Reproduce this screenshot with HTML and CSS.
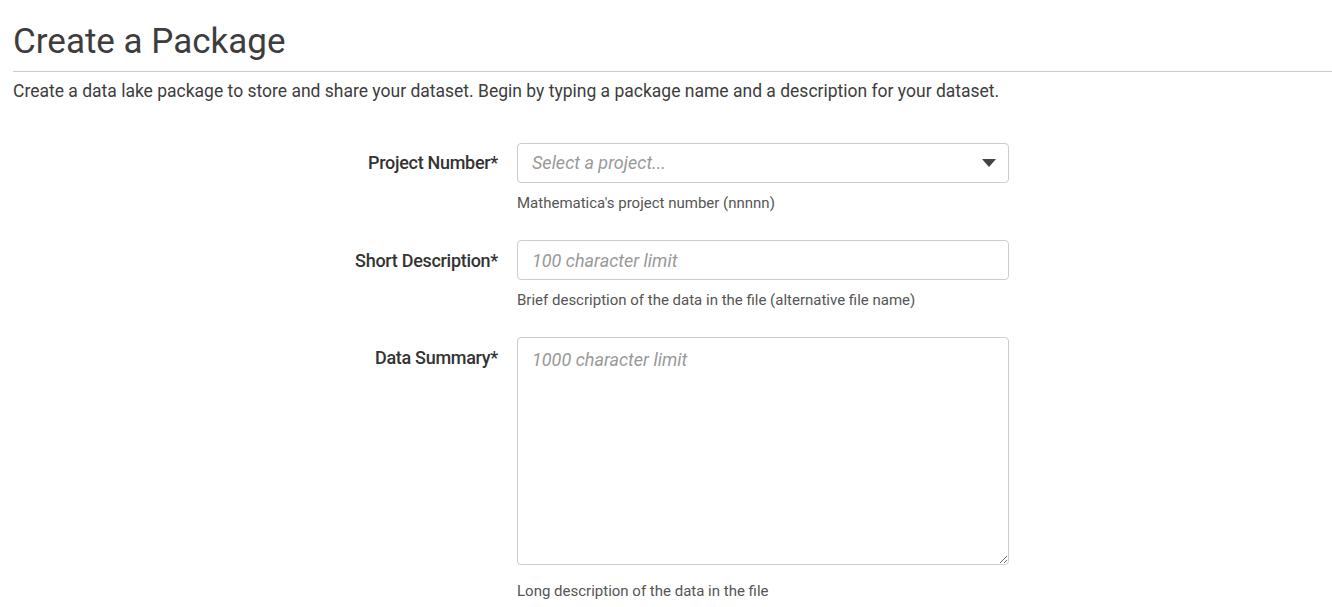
FILE: index.html
```html
<!DOCTYPE html>
<html>
<head>
<meta charset="utf-8">
<link rel="stylesheet" href="styles.css">
</head>
<body>
<div class="page">
  <h1 class="title">Create a Package</h1>
  <p class="intro">Create a data lake package to store and share your dataset. Begin by typing a package name and a description for your dataset.</p>
  <form class="form">
    <div class="row">
      <label class="label">Project Number*</label>
      <div class="field">
        <div class="select">
          <span class="placeholder">Select a project...</span>
          <svg class="caret" width="14" height="8" viewBox="0 0 14 8"><path d="M0 0 H14 L7 8 Z" fill="#444"/></svg>
        </div>
        <div class="help">Mathematica's project number (nnnnn)</div>
      </div>
    </div>
    <div class="row">
      <label class="label">Short Description*</label>
      <div class="field">
        <input class="input" type="text" placeholder="100 character limit">
        <div class="help">Brief description of the data in the file (alternative file name)</div>
      </div>
    </div>
    <div class="row">
      <label class="label">Data Summary*</label>
      <div class="field">
        <textarea class="textarea" placeholder="1000 character limit"></textarea>
        <div class="help">Long description of the data in the file</div>
      </div>
    </div>
  </form>
</div>
</body>
</html>
```
FILE: styles.css
```css
* { box-sizing: border-box; }
html, body { margin: 0; padding: 0; background: #fff; }
body { font-family: Roboto, "Noto Sans", sans-serif; color: #333; }
.page { padding: 0 0 0 13px; }
.title {
  margin: 0;
  padding-top: 21px;
  font-size: 35px;
  font-weight: 400;
  color: #3d3d3d;
  line-height: 42px;
  padding-bottom: 8px;
  border-bottom: 1px solid #ccc;
}
.intro {
  margin: 7px 0 0 0;
  font-size: 17.5px;
  line-height: 24px;
  color: #3d3d3d;
}
.form { margin-top: 40px; }
.row { display: flex; gap: 19px; margin-bottom: 28px; }
.label {
  width: 485px;
  text-align: right;
  font-size: 18px;
  font-weight: 500;
  color: #333;
  padding-top: 9px;
  letter-spacing: -0.3px;
}
.row + .row .label { padding-top: 10px; }
.field { width: 492px; }
.select, .input, .textarea {
  width: 492px;
  border: 1px solid #ccc;
  border-radius: 4px;
  background: #fff;
}
.select {
  height: 40px;
  display: flex;
  align-items: center;
  justify-content: space-between;
  padding: 0 12px 1px 14px;
}
.caret { margin-top: 1px; }
.placeholder, .input::placeholder, .textarea::placeholder {
  font-style: italic;
  color: #999;
  font-size: 18px;
  font-family: Roboto, sans-serif;
}
.input {
  height: 40px;
  padding: 0 14px;
  font-family: Roboto, sans-serif;
  font-size: 18px;
  display: block;
}
.textarea {
  display: block;
  height: 228px;
  padding: 11px 14px;
  font-family: Roboto, sans-serif;
  font-size: 18px;
  resize: vertical;
}
.help {
  margin-top: 11px;
  font-size: 15px;
  line-height: 18px;
  color: #555;
}
.row:last-child .help { margin-top: 17px; }
```
